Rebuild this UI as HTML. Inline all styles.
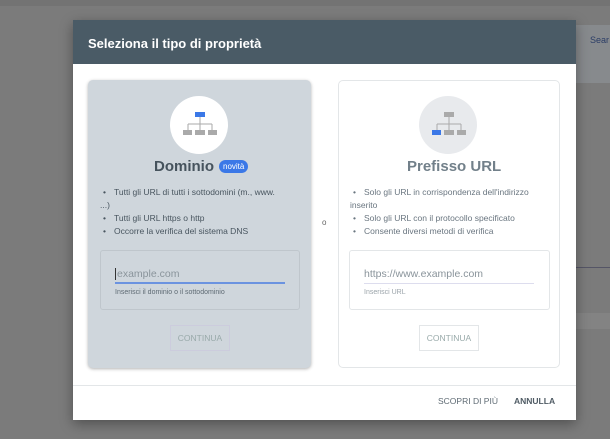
<!DOCTYPE html>
<html><head><meta charset="utf-8"><style>
*{box-sizing:border-box;margin:0;padding:0}
body{width:610px;height:439px;overflow:hidden;background:#7b7b7b;font-family:"Liberation Sans",sans-serif;position:relative}
.abs{position:absolute}
.dlg{left:73px;top:20px;width:503px;height:400px;background:#fff;box-shadow:0 4px 12px rgba(0,0,0,.35)}
.hdr{left:0;top:0;width:503px;height:44px;background:#4a5b66;color:#fff;font-size:13px;font-weight:bold;padding:16px 0 0 15px}
.card{border-radius:5px}
.circ{width:58px;height:58px;border-radius:50%}
ul{list-style:none;font-size:8.5px;line-height:13px}
li:before{content:"•";margin:0 8px 0 3px}
.btn{border:1px solid #ccd;font-size:8.5px;text-align:center;line-height:24px;color:#9aa}
</style></head><body>
<div class="abs" style="left:0;top:0;width:610px;height:6px;background:#737373"></div>
<div class="abs" style="left:576px;top:25px;width:34px;height:58px;background:#878a8d"></div>
<div class="abs" style="left:590px;top:35px;font-size:9px;color:#2b3d66">Sear</div>
<div class="abs" style="left:576px;top:267px;width:34px;height:1px;background:#556"></div>
<div class="abs" style="left:576px;top:313px;width:34px;height:16px;background:#838383"></div>
<div class="abs dlg">
<div class="abs hdr">Seleziona il tipo di proprietà</div>
<div class="abs card" style="left:15px;top:60px;width:223px;height:288px;background:#cfd6dc;box-shadow:0 1px 3px rgba(0,0,0,.3)"></div>
<div class="abs card" style="left:265px;top:60px;width:222px;height:288px;border:1px solid #e3e6e8"></div>
<div class="abs circ" style="left:97px;top:76px;background:#fff"></div>
<svg class="abs" style="left:110px;top:90px" width="34" height="30"><rect x="12" y="2" width="10" height="5" fill="#3b78e7"/><path d="M17 7v7M5 14h24M5 14v6M17 14v6M29 14v6" stroke="#aaa" stroke-width="1"/><rect x="0" y="20" width="9" height="5" fill="#aaa"/><rect x="12" y="20" width="10" height="5" fill="#aaa"/><rect x="25" y="20" width="9" height="5" fill="#aaa"/></svg>
<div class="abs" style="left:81px;top:138px;font-size:15px;font-weight:bold;color:#46535d">Dominio</div>
<div class="abs" style="left:146px;top:140px;background:#3b78e7;color:#fff;font-size:8px;border-radius:8px;padding:2px 4px">novità</div>
<ul class="abs" style="left:27px;top:166px;width:176px;color:#48555f"><li>Tutti gli URL di tutti i sottodomini (m., www. ...)</li><li>Tutti gli URL https o http</li><li>Occorre la verifica del sistema DNS</li></ul>
<div class="abs" style="left:27px;top:230px;width:200px;height:60px;border:1px solid #bfc6cc;border-radius:3px"></div>
<div class="abs" style="left:42px;top:248px;font-size:10.5px;color:#8a949b;border-left:1px solid #333;padding-left:1px">example.com</div>
<div class="abs" style="left:42px;top:262px;width:170px;height:2px;background:#6b93e0"></div>
<div class="abs" style="left:42px;top:269px;font-size:7px;color:#5f6b74">Inserisci il dominio o il sottodominio</div>
<div class="abs btn" style="left:97px;top:305px;width:60px;height:26px">CONTINUA</div>
<div class="abs" style="left:249px;top:198px;font-size:8px;color:#666">o</div>
<div class="abs circ" style="left:346px;top:76px;background:#e8eaed"></div>
<svg class="abs" style="left:359px;top:90px" width="34" height="30"><rect x="12" y="2" width="10" height="5" fill="#aaa"/><path d="M17 7v7M5 14h24M5 14v6M17 14v6M29 14v6" stroke="#aaa" stroke-width="1"/><rect x="0" y="20" width="9" height="5" fill="#3b78e7"/><rect x="12" y="20" width="10" height="5" fill="#aaa"/><rect x="25" y="20" width="9" height="5" fill="#aaa"/></svg>
<div class="abs" style="left:334px;top:138px;font-size:15px;font-weight:bold;color:#72808a">Prefisso URL</div>
<ul class="abs" style="left:277px;top:166px;width:195px;color:#6a7680"><li>Solo gli URL in corrispondenza dell'indirizzo inserito</li><li>Solo gli URL con il protocollo specificato</li><li>Consente diversi metodi di verifica</li></ul>
<div class="abs" style="left:276px;top:230px;width:201px;height:60px;border:1px solid #e3e6e8;border-radius:3px"></div>
<div class="abs" style="left:291px;top:248px;font-size:10.5px;color:#8a949b">https://www.example.com</div>
<div class="abs" style="left:291px;top:263px;width:170px;height:1px;background:#dde"></div>
<div class="abs" style="left:291px;top:269px;font-size:7px;color:#9aa3a9">Inserisci URL</div>
<div class="abs btn" style="left:346px;top:305px;width:60px;height:26px;border-color:#e3e6e8">CONTINUA</div>
<div class="abs" style="left:0;top:365px;width:503px;height:1px;background:#e3e6e8"></div>
<div class="abs" style="left:365px;top:376px;font-size:8.5px;color:#5f6b74">SCOPRI DI PIÙ</div>
<div class="abs" style="left:441px;top:376px;font-size:8.5px;font-weight:bold;color:#4f5b64">ANNULLA</div>
</div>
</body></html>
